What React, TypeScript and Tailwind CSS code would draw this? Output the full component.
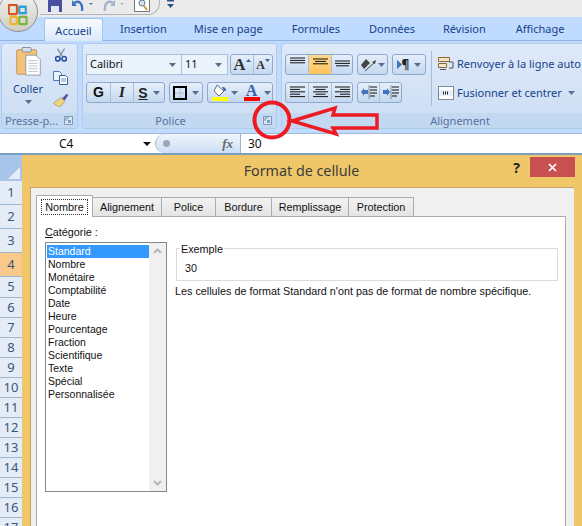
import type { ReactNode } from 'react';

function Caret({ className = '' }: { className?: string }) {
  return (
    <svg width="7" height="4" viewBox="0 0 7 4" className={className}>
      <path d="M0 0h7L3.500 4z" fill="#56708f" />
    </svg>
  );
}

function Launcher({ className = '' }: { className?: string }) {
  return (
    <svg width="9" height="9" viewBox="0 0 9 9" className={className}>
      <path d="M.5.5h8v8h-8z" fill="#dbe7f6" stroke="#7d98bb" />
      <path d="M2 2h3M2 2v3" stroke="#6f8db3" fill="none" />
      <path d="M4 4h3v3H4z" fill="#7f9cc0" />
    </svg>
  );
}

function Btn({ className = '', children }: { className?: string; children: ReactNode }) {
  return (
    <div className={`flex h-full items-center justify-center border-r border-[#a9c0dc] last:border-r-0 ${className}`}>
      {children}
    </div>
  );
}

function Group({ className = '', children }: { className?: string; children: ReactNode }) {
  return (
    <div className={`flex h-[21px] items-center overflow-hidden rounded-[3px] border border-[#8fa9cb] bg-linear-to-b from-[#e6effa] to-[#c4d8f0] ${className}`}>
      {children}
    </div>
  );
}

function Lines({ widths, align }: { widths: number[]; align: 'left' | 'center' | 'right' }) {
  return (
    <svg width="17" height="13" viewBox="0 0 17 13">
      {widths.map((w, i) => {
        const x = align === 'left' ? 1 : align === 'right' ? 16 - w : (17 - w) / 2;
        return <rect key={i} x={x} y={i * 2.4 + 0.5} width={w} height="1" fill="#111" />;
      })}
    </svg>
  );
}

function Indent({ flip }: { flip?: boolean }) {
  return (
    <svg width="18" height="15" viewBox="0 0 18 15">
      <path d={flip ? 'M1 5h4V3l3 4-3 4V9H1z' : 'M8 5H4V3L1 7l3 4V9h4z'} fill="#3f73c2" />
      <path d="M9 .5v14" stroke="#333" strokeDasharray="1 1" />
      <path d="M10 2h7M10 5h7M10 8h7M10 11h5" stroke="#111" strokeWidth="1.200" />
    </svg>
  );
}

function RibbonLabel({ children, className = '' }: { children: ReactNode; className?: string }) {
  return (
    <div className={`relative flex h-[15px] items-center justify-center bg-[#c3d8f1] text-[11px] leading-none text-[#56739c] ${className}`}>
      {children}
    </div>
  );
}

function ClipboardSide() {
  return (
    <div className="flex flex-col items-center gap-[8px] pt-[1px]">
      <svg width="12" height="15" viewBox="0 0 15 17">
        <path d="M3 0 9 9M12 0 6 9" stroke="#7f8ea3" strokeWidth="1.600" />
        <circle cx="3.500" cy="12.500" r="2.800" fill="none" stroke="#244f9e" strokeWidth="2" />
        <circle cx="11.500" cy="12.500" r="2.800" fill="none" stroke="#244f9e" strokeWidth="2" />
      </svg>
      <svg width="15" height="14" viewBox="0 0 15 14">
        <path d="M.5.5h6l2 2v7h-8z" fill="#eef4fb" stroke="#4c79b4" />
        <path d="M6.500 4.500h6l2 2v7h-8z" fill="#fff" stroke="#30609f" />
        <path d="M8 8h5M8 10h5" stroke="#6f8fb8" />
      </svg>
      <svg width="17" height="14" viewBox="0 0 17 15">
        <path d="M10 6 15 1l2 1-4 6z" fill="#5b4fa0" />
        <path d="M1 11 9 5l4 4-5 6c-2-1-5-2-7-4z" fill="#f0d77e" stroke="#9c8a4a" strokeWidth=".7" />
      </svg>
    </div>
  );
}

function Ribbon() {
  return (
    <div className="flex h-[93px] gap-[4px] border-b border-[#a4bad4] bg-[#bfdbff] pl-[1px] pt-[2px]">
      {/* Presse-papiers */}
      <div className="flex h-[86px] w-[77px] flex-col overflow-hidden rounded-[3px] border border-[#b3cbe6] bg-linear-to-b from-[#dfeafa] to-[#cbdcf2]">
        <div className="flex flex-1 gap-[9px] pl-[11px] pt-[3px]">
          <div className="flex w-[30px] flex-col items-center">
            <svg width="27" height="29" viewBox="0 0 28 32">
              <rect x="1" y="3" width="22" height="27" rx="1.500" fill="#f4c27a" stroke="#b8935c" />
              <rect x="7" y="0.500" width="10" height="5" rx="1" fill="#d8dde4" stroke="#7d8794" />
              <path d="M11 9h11l5 5v17H11z" fill="#fff" stroke="#8b98a8" />
              <path d="M14 15h10M14 18h10M14 21h10M14 24h10M14 27h10" stroke="#b4bfcc" />
            </svg>
            <span className="mt-[6px] text-[11px] leading-[14px] text-[#15428b]">Coller</span>
            <Caret className="mt-[4px]" />
          </div>
          <ClipboardSide />
        </div>
        <RibbonLabel className="justify-start pl-[3px]">
          Presse-p...
          <Launcher className="absolute right-[4px] top-[3px]" />
        </RibbonLabel>
      </div>

      {/* Police */}
      <div className="flex h-[86px] w-[195px] flex-col overflow-hidden rounded-[3px] border border-[#b3cbe6] bg-linear-to-b from-[#dfeafa] to-[#cbdcf2]">
        <div className="flex flex-1 flex-col gap-[7px] pl-[3px] pt-[10px]">
          <div className="flex h-[21px]">
            <div className="flex w-[96px] items-center justify-between border border-[#a9c0dc] bg-[#eaf2fc] pl-[3px] pr-[5px] text-[11px] text-[#111]">
              Calibri
              <Caret />
            </div>
            <div className="flex w-[46px] items-center justify-between border border-l-0 border-[#a9c0dc] bg-[#eaf2fc] pl-[3px] pr-[5px] text-[11px] text-[#111]">
              11
              <Caret />
            </div>
            <Group className="ml-[2px] w-[43px]">
              <Btn className="w-[23px]">
                <span className="font-['Liberation_Serif',serif] text-[17px] font-bold leading-none text-[#333]">A</span>
                <svg width="5" height="3" viewBox="0 0 5 3" className="mb-[9px]"><path d="M0 3h5L2.500 0z" fill="#3b5f99" /></svg>
              </Btn>
              <Btn className="flex-1">
                <span className="font-['Liberation_Serif',serif] text-[12px] font-bold leading-none text-[#333]">A</span>
                <svg width="5" height="3" viewBox="0 0 5 3" className="mb-[9px]"><path d="M0 0h5L2.500 3z" fill="#3b5f99" /></svg>
              </Btn>
            </Group>
          </div>
          <div className="flex h-[21px] gap-[4px]">
            <Group className="w-[79px]">
              <Btn className="w-[24px] font-['Liberation_Sans',sans-serif] text-[14px] font-bold text-[#111]">G</Btn>
              <Btn className="w-[23px]">
                <span className="font-['Liberation_Serif',serif] text-[15px] font-bold italic text-[#222]">I</span>
              </Btn>
              <Btn className="flex-1 gap-[5px]">
                <span className="font-['Liberation_Sans',sans-serif] text-[14px] font-bold leading-none text-[#222] underline">S</span>
                <Caret />
              </Btn>
            </Group>
            <Group className="w-[34px]">
              <Btn className="flex-1 gap-[5px]">
                <svg width="14" height="14" viewBox="0 0 14 14">
                  <rect x="1" y="1" width="12" height="12" fill="none" stroke="#000" strokeWidth="2" />
                  <path d="M7 2v10M2 7h10" stroke="#9aa6b5" strokeDasharray="1 1" />
                </svg>
                <Caret />
              </Btn>
            </Group>
            <Group className="w-[66px]">
              <Btn className="w-[34px] gap-[2px] border-r-0">
                <svg width="17" height="17" viewBox="0 0 17 17">
                  <path d="M5 1 12 7l-5 5-5-5z" fill="#fff" stroke="#5a6b80" />
                  <path d="M10 3c3 0 4 1 4 4h-2z" fill="#3d6fb5" />
                  <rect x="0" y="13" width="16" height="4" fill="#ffff00" />
                </svg>
                <Caret />
              </Btn>
              <Btn className="flex-1 gap-[4px]">
                <div className="flex w-[16px] flex-col items-center">
                  <span className="font-['Liberation_Serif',serif] text-[16px] font-bold leading-[13px] text-[#3a5ea8]">A</span>
                  <div className="h-[4px] w-[16px] bg-[#ff0000]" />
                </div>
                <Caret />
              </Btn>
            </Group>
          </div>
        </div>
        <RibbonLabel className="pr-[18px]">
          Police
          <Launcher className="absolute right-[4px] top-[3px]" />
        </RibbonLabel>
      </div>

      {/* Alignement */}
      <div className="flex h-[86px] flex-1 flex-col overflow-hidden rounded-l-[3px] border border-r-0 border-[#b3cbe6] bg-linear-to-b from-[#dfeafa] to-[#cbdcf2]">
        <div className="flex flex-1 pl-[3px] pt-[10px]">
          <div className="flex flex-col gap-[7px]">
            <div className="flex gap-[4px]">
              <Group className="w-[68px]">
                <Btn className="w-[23px] items-start pt-[2px]"><Lines widths={[15, 15, 15]} align="center" /></Btn>
                <Btn className="w-[23px] bg-linear-to-b from-[#ffd88a] to-[#ffc45e]"><Lines widths={[15, 11, 15]} align="center" /></Btn>
                <Btn className="flex-1 items-end pb-[1px]"><Lines widths={[15, 15, 13]} align="center" /></Btn>
              </Group>
              <Group className="w-[31px]">
                <Btn className="flex-1 gap-[1px]">
                  <svg width="17" height="15" viewBox="0 0 17 15">
                    <path d="M1 8 6 2l4 4-6 6z" fill="#444" />
                    <path d="M5 14 15 5" stroke="#444" />
                    <path d="M16 3l-1 4-3-2z" fill="#444" />
                  </svg>
                  <Caret />
                </Btn>
              </Group>
              <Group className="w-[34px]">
                <Btn className="flex-1 gap-[5px]">
                  <span className="flex items-center text-[12px] font-bold leading-none text-[#222]">
                    <svg width="5" height="9" viewBox="0 0 5 9"><path d="M0 0l5 4.500L0 9z" fill="#3f73c2" /></svg>
                    ¶
                  </span>
                  <Caret />
                </Btn>
              </Group>
            </div>
            <div className="flex gap-[4px]">
              <Group className="w-[68px]">
                <Btn className="w-[23px]"><Lines widths={[15, 10, 15, 10, 15]} align="left" /></Btn>
                <Btn className="w-[23px]"><Lines widths={[15, 10, 15, 10, 15]} align="center" /></Btn>
                <Btn className="flex-1"><Lines widths={[15, 10, 15, 10, 15]} align="right" /></Btn>
              </Group>
              <Group className="w-[45px]">
                <Btn className="w-[22px]"><Indent /></Btn>
                <Btn className="flex-1"><Indent flip /></Btn>
              </Group>
            </div>
          </div>
          <div className="ml-[5px] mt-[-3px] h-[55px] w-px bg-[#a9bdd6]" />
          <div className="ml-[6px] mt-[2px] flex flex-col gap-[13px] whitespace-nowrap text-[11px] leading-[16px] text-[#15428b]">
            <div className="flex items-center gap-[3px]">
              <svg width="16" height="15" viewBox="0 0 16 15">
                <path d="M.5.500h11v4H.5zM.5 6.500h8v4H.5z" fill="#f4e4c4" stroke="#8a6a3a" />
                <path d="M2 12.500h6M11 5h4v6h-4" stroke="#555" fill="none" />
              </svg>
              Renvoyer à la ligne auto
            </div>
            <div className="flex items-center gap-[3px]">
              <svg width="16" height="14" viewBox="0 0 16 14">
                <rect x=".5" y=".5" width="15" height="13" fill="#fff" stroke="#7d8a9c" />
                <rect x="1" y="4" width="14" height="6" fill="#e7eef8" />
                <path d="M5 7h6" stroke="#222" strokeWidth="3" strokeDasharray="1 1" />
              </svg>
              Fusionner et centrer
              <Caret className="ml-[3px]" />
            </div>
          </div>
        </div>
        <RibbonLabel className="pl-[56px]">Alignement</RibbonLabel>
      </div>
    </div>
  );
}

function Titlebar() {
  return (
    <div className="relative h-[17px] bg-[#ebebeb]">
      <div className="ml-[40px] flex h-[15px] w-[120px] items-start gap-[9px] rounded-br-[12px] border-b border-r border-[#b0b4ba] pl-[8px]">
        <svg width="14" height="12" viewBox="0 0 14 12"><path d="M0 0h14v12H0z" fill="#4a4e9e" /><path d="M3 6h8v6H3z" fill="#e2e6ef" /></svg>
        <svg width="22" height="11" viewBox="0 0 22 11">
          <path d="M3 3c5-3 9 0 8 8" fill="none" stroke="#3f73c2" strokeWidth="2.400" />
          <path d="M1 0v6h5z" fill="#3f73c2" />
          <path d="M18 3h4l-2 2z" fill="#56708f" />
        </svg>
        <svg width="22" height="11" viewBox="0 0 22 11">
          <path d="M11 3C6 0 2 3 3 11" fill="none" stroke="#a2b7cd" strokeWidth="2.400" />
          <path d="M13 0v6H8z" fill="#a2b7cd" />
          <path d="M18 3h4l-2 2z" fill="#a9b3be" />
        </svg>
        <svg width="16" height="12" viewBox="0 0 16 12" className="ml-px">
          <path d="M.5 0v11.500h15V0" fill="#fff" stroke="#777" />
          <circle cx="8" cy="3" r="3" fill="#cfe0ee" stroke="#6d7c8c" />
          <path d="M10 6l3 4" stroke="#c59a3a" strokeWidth="2" />
        </svg>
      </div>
      <svg width="7" height="9" viewBox="0 0 7 9" className="absolute left-[167px] top-0">
        <path d="M0 0h7v1.500H0z" fill="#2c4f8a" />
        <path d="M0 4h7L3.500 8z" fill="#2c4f8a" />
      </svg>
    </div>
  );
}

function Tabs() {
  return (
    <div className="flex h-[24px] items-end border-b border-[#8fb2de] bg-[#bfdbff] pl-[44px] text-[11px] leading-[16px] text-[#15428b]">
      <div className="-mb-px flex h-[23px] w-[59px] items-center justify-center rounded-t-[3px] border border-b-0 border-[#a3c4ea] bg-linear-to-b from-[#f8fbff] to-[#dce9f9] pt-px">
        Accueil
      </div>
      <div className="flex h-[23px] items-center whitespace-nowrap pt-px">
        <span className="ml-[17px]">Insertion</span>
        <span className="ml-[27px]">Mise en page</span>
        <span className="ml-[29px]">Formules</span>
        <span className="ml-[29px]">Données</span>
        <span className="ml-[28px]">Révision</span>
        <span className="ml-[30px]">Affichage</span>
      </div>
    </div>
  );
}

function FormulaBar() {
  return (
    <div className="flex h-[21px] items-center border-b-2 border-[#7b9dc1] bg-white text-[12px] text-[#111]">
      <div className="flex w-[155px] items-center">
        <span className="ml-[59px]">C4</span>
        <svg width="8" height="4" viewBox="0 0 8 4" className="ml-[70px]"><path d="M0 0h8L4 4z" fill="#111" /></svg>
      </div>
      <div className="flex h-full w-[85px] items-center justify-between rounded-l-full border-l border-[#9db4cf] bg-linear-to-b from-[#eef4fc] to-[#cddff4] px-[7px]">
        <span className="h-[7px] w-[7px] rounded-full bg-[#9ba8b8]" />
        <span className="font-['Liberation_Serif',serif] text-[13px] font-bold italic text-[#666]">fx</span>
      </div>
      <span className="border-l border-[#9db4cf] pl-[7px] leading-[19px]">30</span>
    </div>
  );
}

const rows = [
  { n: 1, h: 'h-[24px]' },
  { n: 2, h: 'h-[24px]' },
  { n: 3, h: 'h-[24px]' },
  { n: 4, h: 'h-[24px]', on: true },
  { n: 5, h: 'h-[21px]' },
  { n: 6, h: 'h-[20px]' },
  { n: 7, h: 'h-[20px]' },
  { n: 8, h: 'h-[20px]' },
  { n: 9, h: 'h-[20px]' },
  { n: 10, h: 'h-[20px]' },
  { n: 11, h: 'h-[20px]' },
  { n: 12, h: 'h-[20px]' },
  { n: 13, h: 'h-[20px]' },
  { n: 14, h: 'h-[20px]' },
  { n: 15, h: 'h-[20px]' },
  { n: 16, h: 'h-[20px]' },
  { n: 17, h: 'h-[20px]' },
];

function RowHeaders() {
  return (
    <div className="w-[22px] shrink-0 text-[13px] text-[#3b5878]">
      <div className="flex h-[26px] items-end justify-end bg-[#a9c4e9] p-[2px]">
        <svg width="12" height="12" viewBox="0 0 12 12"><path d="M12 0v12H0z" fill="#e3edf9" /></svg>
      </div>
      {rows.map((r) => (
        <div
          key={r.n}
          className={`flex items-center justify-center border-b border-[#9eb6ce] ${r.h} ${r.on ? 'bg-[#f8c98a]' : 'bg-[#e4ecf7]'}`}
        >
          {r.n}
        </div>
      ))}
    </div>
  );
}

const categories = [
  'Standard',
  'Nombre',
  'Monétaire',
  'Comptabilité',
  'Date',
  'Heure',
  'Pourcentage',
  'Fraction',
  'Scientifique',
  'Texte',
  'Spécial',
  'Personnalisée',
];

const dialogTabs = [
  { label: 'Alignement', w: 'w-[69px]' },
  { label: 'Police', w: 'w-[54px]' },
  { label: 'Bordure', w: 'w-[56px]' },
  { label: 'Remplissage', w: 'w-[77px]' },
  { label: 'Protection', w: 'w-[65px]' },
];

function Dialog() {
  return (
    <div className="flex flex-1 flex-col bg-[#efc768] px-[8px]">
      <div className="relative flex h-[32px] items-center justify-center pr-px text-[14.3px] text-[#3c3c3c]">
        Format de cellule
        <span className="absolute right-[54px] top-[2px] text-[14px] font-bold text-[#222]">?</span>
        <div className="absolute right-[-1px] top-[2px] flex h-[20px] w-[45px] items-center justify-center bg-[#c75050]">
          <svg width="9" height="9" viewBox="0 0 9 9"><path d="M1 1l7 7M8 1 1 8" stroke="#fff" strokeWidth="1.700" /></svg>
        </div>
      </div>
      <div className="flex-1 border-l border-t border-[#c4a560] bg-[#f0f0f0] pl-[5px] pr-[8px] pt-[7px] font-['Liberation_Sans',sans-serif] text-[10.8px] text-[#111]">
        <div className="flex h-[21px] items-end">
          <div className="z-10 -mb-px flex h-[22px] w-[57px] items-center justify-center border border-b-0 border-[#acacac] bg-white">
            <span className="border border-dotted border-[#333] px-[3px] leading-[14px]">Nombre</span>
          </div>
          {dialogTabs.map((t) => (
            <div
              key={t.label}
              className={`flex h-[19px] items-center justify-center border border-b-0 border-l-0 border-[#acacac] bg-linear-to-b from-[#f2f2f2] to-[#e4e4e4] ${t.w}`}
            >
              {t.label}
            </div>
          ))}
        </div>
        <div className="flex h-[320px] gap-[9px] border border-[#acacac] bg-white pl-[8px] pt-[8px]">
          <div className="w-[122px] shrink-0">
            <div className="h-[17px] leading-[15px]">
              <span className="underline">C</span>atégorie :
            </div>
            <div className="flex h-[250px] border border-[#828790] pl-[1px] pt-[2px]">
              <div className="flex-1 text-[10.5px] leading-[12px]">
                {categories.map((c, i) => (
                  <div key={c} className={`h-[13px] pl-[1px] ${i === 0 ? 'bg-[#3399ff] text-white' : ''}`}>
                    {c}
                  </div>
                ))}
              </div>
              <div className="-mt-[2px] flex w-[17px] flex-col items-center justify-between bg-[#f0f0f0] py-[5px]">
                <svg width="9" height="6" viewBox="0 0 9 6"><path d="M1 5l3.500-3.500L8 5" fill="none" stroke="#b8b8b8" strokeWidth="2" /></svg>
                <svg width="9" height="6" viewBox="0 0 9 6"><path d="M1 1l3.500 3.500L8 1" fill="none" stroke="#b8b8b8" strokeWidth="2" /></svg>
              </div>
            </div>
          </div>
          <div className="w-[382px] pt-[23px]">
            <div className="relative h-[33px] border border-[#dcdcdc] pl-[8px] pt-[11px] leading-[16px]">
              <span className="absolute left-[3px] top-[-7px] bg-white px-px leading-[14px]">Exemple</span>
              30
            </div>
            <p className="-ml-px mt-[2px] whitespace-nowrap leading-[16px]">
              Les cellules de format Standard n'ont pas de format de nombre spécifique.
            </p>
          </div>
        </div>
      </div>
    </div>
  );
}

export default function App() {
  return (
    <div className="relative h-[526px] w-[582px] overflow-hidden bg-white font-['Noto_Sans',sans-serif]">
      <Titlebar />
      <Tabs />
      <Ribbon />
      <FormulaBar />
      <div className="flex">
        <RowHeaders />
        <Dialog />
      </div>

      {/* Bouton Office */}
      <div className="absolute left-[-2px] top-[-8px] flex h-[40px] w-[40px] items-center justify-center rounded-full border border-[#8f8f8f] bg-linear-to-b from-[#f2f2f0] to-[#cfcfc4] pt-[6px]">
        <svg width="21" height="22" viewBox="0 0 26 24" fill="none" strokeWidth="2.600" preserveAspectRatio="none">
          <rect x="1" y="1" width="10" height="10" rx="1.500" stroke="#d9531e" />
          <rect x="14" y="3" width="8" height="7" stroke="#2f9fd8" />
          <rect x="3" y="14" width="8" height="8" rx="1" stroke="#f0b429" />
          <rect x="14" y="14" width="9" height="8" rx="1" stroke="#7cb342" />
        </svg>
      </div>

      {/* Annotation rouge */}
      <svg width="140" height="50" viewBox="0 0 140 50" className="absolute left-[250px] top-[100px]" fill="none" stroke="#ed1c24" strokeWidth="3.500">
        <circle cx="22" cy="20" r="17.500" strokeWidth="4" />
        <path d="M42 21 85 8l-2 7h44v13H83l3 6z" />
      </svg>
    </div>
  );
}
